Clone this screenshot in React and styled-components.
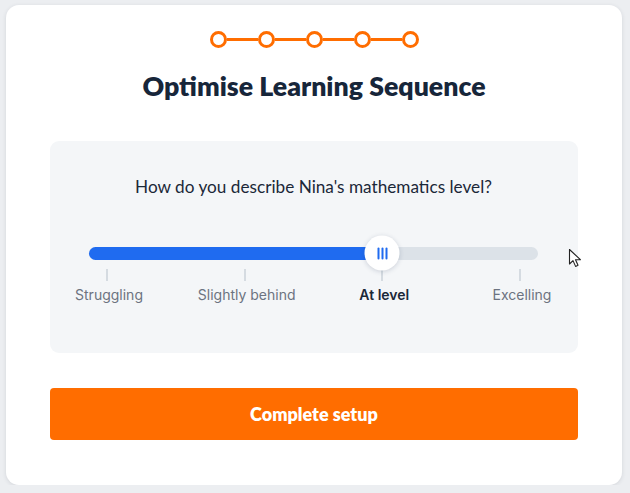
import { useState } from "react";
import styled, { createGlobalStyle } from "styled-components";

const GlobalStyle = createGlobalStyle`
  * { box-sizing: border-box; }
  body {
    margin: 0;
    background: #eceef1;
    font-family: "Lato", "Noto Sans", sans-serif;
  }
`;

const LEVELS = ["Struggling", "Slightly behind", "At level", "Excelling"];
const STEPS = 5;

const App = () => {
  const [level] = useState(2);
  const percent = level / (LEVELS.length - 1);

  return (
    <>
      <GlobalStyle />
      <Card>
        <Stepper>
          {Array.from({ length: STEPS }).map((_, i) => (
            <StepGroup key={i}>
              {i > 0 && <Connector />}
              <Dot />
            </StepGroup>
          ))}
        </Stepper>

        <Title>Optimise Learning Sequence</Title>

        <Panel>
          <Question>How do you describe Nina's mathematics level?</Question>

          <Slider>
            <Track>
              <Rail>
                <Fill style={{ width: `calc(18px + (100% - 36px) * ${percent})` }} />
                <Thumb style={{ left: `calc(18px + (100% - 36px) * ${percent})` }}>
                  <Grip />
                  <Grip />
                  <Grip />
                </Thumb>
              </Rail>
            </Track>
            <Marks>
              {LEVELS.map((label, i) => (
                <Mark key={label}>
                  <Tick />
                  <MarkLabel $active={i === level}>{label}</MarkLabel>
                </Mark>
              ))}
            </Marks>
          </Slider>
        </Panel>

        <Button>Complete setup</Button>

        <Cursor width="15" height="20" viewBox="0 0 15 20">
          <path
            d="M1.5 1.5 L1.5 16 L5 12.6 L7.6 18.4 L10 17.3 L7.5 11.7 L12.4 11.7 Z"
            fill="#fff"
            stroke="#222"
            strokeWidth="1.1"
            strokeLinejoin="round"
          />
        </Cursor>
      </Card>
    </>
  );
};

const Card = styled.div`
  position: relative;
  margin: 5px 8px 0 6px;
  width: 616px;
  height: 480px;
  background: #fff;
  border-radius: 13px;
  box-shadow: 0 1px 4px rgba(30, 40, 60, 0.12);
  padding: 26px 44px 0;
  display: flex;
  flex-direction: column;
  align-items: stretch;
`;

const Stepper = styled.div`
  display: flex;
  justify-content: center;
  align-items: center;
  height: 17px;
`;

const StepGroup = styled.div`
  display: flex;
  align-items: center;
`;

const Dot = styled.span`
  width: 17px;
  height: 17px;
  border-radius: 50%;
  border: 3.5px solid #ff6d00;
  background: #fff;
`;

const Connector = styled.span`
  width: 31px;
  height: 2.5px;
  background: #ff6d00;
`;

const Title = styled.h1`
  margin: 22px 0 0;
  text-align: center;
  font-size: 26.7px;
  line-height: 32px;
  font-weight: 800;
  color: #17263a;
`;

const Panel = styled.div`
  margin-top: 39px;
  height: 212px;
  background: #f4f6f8;
  border-radius: 9px;
  padding: 34px 40px 0 39px;
  display: flex;
  flex-direction: column;
`;

const Question = styled.p`
  margin: 0;
  text-align: center;
  font-size: 17.2px;
  line-height: 24px;
  color: #1b2838;
`;

const Slider = styled.div`
  margin-top: 36px;
  display: flex;
  flex-direction: column;
`;

const Track = styled.div`
  height: 36px;
  display: flex;
  align-items: center;
`;

const Rail = styled.div`
  position: relative;
  width: 100%;
  height: 13px;
  border-radius: 7px;
  background: #dce2e8;
`;

const Fill = styled.div`
  height: 100%;
  border-radius: 7px 0 0 7px;
  background: #1f6bf0;
`;

const Thumb = styled.div`
  position: absolute;
  top: 50%;
  width: 35px;
  height: 35px;
  transform: translate(-50%, -50%);
  border-radius: 50%;
  background: #fff;
  box-shadow: 0 1px 5px rgba(20, 40, 80, 0.18);
  display: flex;
  justify-content: center;
  align-items: center;
  gap: 2px;
`;

const Grip = styled.span`
  width: 2px;
  height: 12px;
  background: #1f6bf0;
  border-radius: 1px;
`;

const Marks = styled.div`
  display: flex;
  justify-content: space-between;
  padding: 0 18px;
  margin-top: -2px;
`;

const Mark = styled.div`
  width: 0;
  display: flex;
  flex-direction: column;
  align-items: center;
`;

const Tick = styled.span`
  width: 2px;
  height: 12px;
  background: #d5dbe1;
`;

const MarkLabel = styled.span`
  margin-top: 5px;
  margin-left: 4px;
  white-space: nowrap;
  font-family: "Inter", "Noto Sans", sans-serif;
  font-size: 14px;
  line-height: 18px;
  font-weight: ${({ $active }) => ($active ? 600 : 400)};
  color: ${({ $active }) => ($active ? "#1b2838" : "#6c7380")};
`;

const Button = styled.button`
  margin-top: 35px;
  height: 52px;
  border: none;
  border-radius: 4px;
  background: #ff6d00;
  color: #fff;
  font-family: "Lato", "Noto Sans", sans-serif;
  font-size: 18px;
  font-weight: 800;
  cursor: pointer;
`;

const Cursor = styled.svg`
  position: absolute;
  left: 562px;
  top: 243px;
  pointer-events: none;
`;

export default App;
